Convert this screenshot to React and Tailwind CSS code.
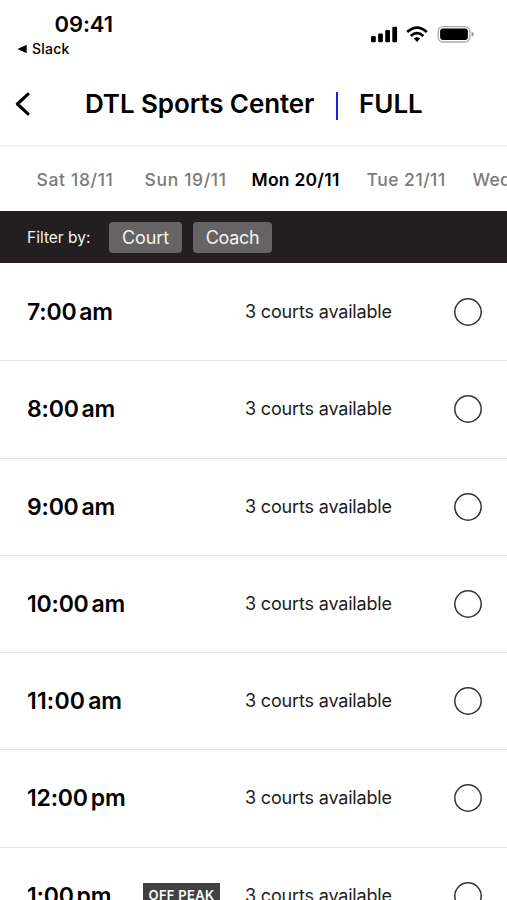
const DAYS = [
  { label: 'Sat 18/11', box: 'w-[108px]', text: 'tracking-[0.65px]' },
  { label: 'Sun 19/11', box: 'w-[107px]', text: 'tracking-[0.65px]' },
  { label: 'Mon 20/11', box: 'w-[115px]', text: 'tracking-[0.25px]', active: true },
  { label: 'Tue 21/11', box: 'w-[106px]', text: 'tracking-[0.5px]' },
  { label: 'Wed 22/11', box: 'w-[110px]', text: 'tracking-[0.3px]' },
];

const SLOTS = [
  { time: '7:00', period: 'am' },
  { time: '8:00', period: 'am' },
  { time: '9:00', period: 'am' },
  { time: '10:00', period: 'am' },
  { time: '11:00', period: 'am', wide: true },
  { time: '12:00', period: 'pm' },
  { time: '1:00', period: 'pm', offPeak: true },
];

function StatusBar() {
  return (
    <div className="flex h-[62px] justify-between">
      <div className="pl-[17px] pt-[11px]">
        <div className="pl-[37.5px] text-[22px] font-semibold leading-[27px] tracking-[-0.1px]">09:41</div>
        <div className="flex h-[22px] items-center gap-[5px]">
          <svg width="10" height="10" viewBox="0 0 10 10" className="shrink-0">
            <path d="M0.5 5 9.7 0.8V9.2Z" />
          </svg>
          <span className="text-[14px] font-medium leading-[20px] tracking-[0.25px]">Slack</span>
        </div>
      </div>
      <svg width="103" height="20" viewBox="0 0 103 20" className="mr-[33px] mt-[25px] shrink-0">
        <rect x="0" y="11" width="4.8" height="6.3" rx="1.3" />
        <rect x="7.1" y="8.4" width="4.8" height="8.9" rx="1.3" />
        <rect x="14.2" y="5.1" width="4.8" height="12.2" rx="1.3" />
        <rect x="21.3" y="1.7" width="4.8" height="15.6" rx="1.3" />
        <g fill="none" stroke="#000" strokeWidth="2.7">
          <path d="M36.2 7.1Q46 -1.9 55.8 7.1" />
          <path d="M39.7 11Q46 5.2 52.3 11" />
        </g>
        <path d="M42.8 13.6Q46 11 49.2 13.6L46 17Z" />
        <rect x="67.1" y="1.6" width="31.8" height="15.4" rx="4.8" fill="none" stroke="#aaa" strokeWidth="1.3" />
        <rect x="69.1" y="3.5" width="27.8" height="11.6" rx="3" />
        <path d="M100.6 6.6Q102.8 7.5 102.8 9.3T100.6 12Z" fill="#999" />
      </svg>
    </div>
  );
}

function Header() {
  return (
    <header className="flex h-[85px] items-center border-b-2 border-[#f0f0f0]">
      <svg width="18" height="26" viewBox="0 0 18 26" className="ml-[13px] shrink-0">
        <path d="M15 3.2 4.4 13 15 22.8" fill="none" stroke="#000" strokeWidth="3.2" strokeLinecap="round" strokeLinejoin="round" />
      </svg>
      <h1 className="ml-[54px] mt-px w-[251px] whitespace-nowrap text-[26px] font-semibold leading-8 tracking-[-0.1px]">DTL Sports Center</h1>
      <div className="mt-[5px] h-7 w-[2px] bg-[#1b20dc]" />
      <div className="ml-[21px] mt-px text-[26px] font-semibold leading-8 tracking-[0px]">FULL</div>
    </header>
  );
}

function Slot({ time, period, offPeak, wide }) {
  return (
    <li className="flex h-[97.25px] items-center border-b border-[#e4e4e4] pl-[27px]">
      <div className="flex w-[116px] items-baseline gap-[3px] text-[23px] font-semibold leading-7">
        <span className={wide ? 'tracking-[0.2px]' : 'tracking-[-0.2px]'}>{time}</span>
        <span className="tracking-[-0.2px]">{period}</span>
      </div>
      <div className="w-[102px]">
        {offPeak && (
          <div className="flex h-[26px] w-[77px] items-center justify-center bg-[#414141] text-[13px] font-semibold tracking-[0.3px] text-white">
            OFF PEAK
          </div>
        )}
      </div>
      <div className="w-[209px] whitespace-nowrap text-[18px] leading-6 tracking-[-0.17px] text-[#1c1c1c]">3 courts available</div>
      <svg width="28" height="28" viewBox="0 0 28 28" className="shrink-0">
        <circle cx="14" cy="14" r="13.2" fill="none" stroke="#333" strokeWidth="1.5" />
      </svg>
    </li>
  );
}

export default function App() {
  return (
    <div className="h-[900px] w-[507px] overflow-hidden bg-white text-black [font-family:Inter,'Liberation_Sans',sans-serif]">
      <StatusBar />
      <Header />
      <nav className="flex h-16 items-center overflow-hidden pl-[36.5px] pt-px">
        {DAYS.map((d) => (
          <div key={d.label} className={`${d.box} shrink-0 whitespace-nowrap text-[17.5px] leading-6 ${d.text} ${d.active ? 'font-semibold text-black' : 'font-medium text-[#7b7b7b]'}`}>
            {d.label}
          </div>
        ))}
      </nav>
      <div className="flex h-[52px] items-center bg-[#231f20] pl-[27px] text-[#f2f2f2]">
        <span className="w-[82px] pt-[2px] text-[15.5px]">Filter by:</span>
        <button className="h-[31px] w-[73px] rounded-[4px] bg-[#656364] text-[18px] tracking-[-0.1px]">Court</button>
        <button className="ml-[11px] h-[31px] w-[79px] rounded-[4px] bg-[#656364] text-[18px] tracking-[-0.3px]">Coach</button>
      </div>
      <ul className="pt-px">
        {SLOTS.map((s) => (
          <Slot key={s.time} {...s} />
        ))}
      </ul>
    </div>
  );
}
